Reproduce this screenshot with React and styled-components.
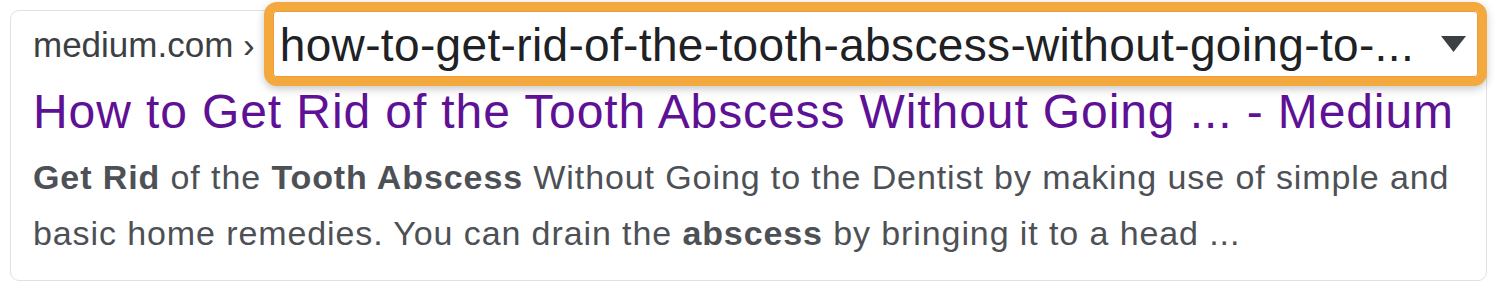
import React from "react"
import styled, { createGlobalStyle } from "styled-components"

const GlobalStyle = createGlobalStyle`
  body {
    margin: 0;
    background: #ffffff;
    font-family: "Liberation Sans", Arial, sans-serif;
  }
`

const Card = styled.div`
  box-sizing: border-box;
  width: 1477px;
  height: 271px;
  margin: 10px 0 0 10px;
  padding: 0 0 0 22px;
  border: 1px solid #dfe1e5;
  border-radius: 9px;
  background: #ffffff;
`

const Crumbs = styled.div`
  display: flex;
  align-items: center;
  margin: -9px -1px 0 0;
`

const Site = styled.span`
  font-size: 35px;
  color: #3c4043;
  white-space: nowrap;
  margin-right: 9px;
  padding-top: 2px;
`

const Slug = styled.div`
  flex: 1;
  display: flex;
  align-items: center;
  justify-content: space-between;
  box-sizing: border-box;
  height: 84px;
  padding: 0 12px 0 7px;
  border: 9px solid #f3a93e;
  border-radius: 13px;
  background: #ffffff;
  box-shadow: inset 0 0 0 1px #ef9a37, 0 3px 8px rgba(0, 0, 0, 0.22);
`

const SlugText = styled.span`
  font-size: 46px;
  letter-spacing: 0.35px;
  color: #202124;
  white-space: nowrap;
  padding-top: 2px;
`

const Title = styled.h3`
  margin: 0;
  font-size: 48px;
  letter-spacing: 0.9px;
  line-height: 52px;
  font-weight: 400;
  color: #5f1196;
  white-space: nowrap;
`

const Snippet = styled.p`
  margin: 11px 0 0;
  font-size: 34px;
  letter-spacing: 0.9px;
  line-height: 56px;
  color: #4d5156;
  white-space: nowrap;

  b {
    font-weight: 700;
    color: #4d5156;
  }
`

const Caret = () => (
  <svg width="25" height="16" viewBox="0 0 25 16">
    <path d="M0 0 H25 L12.5 16 Z" fill="#3c4043" />
  </svg>
)

const App = () => {
  return (
    <>
      <GlobalStyle />
      <Card>
        <Crumbs>
          <Site>medium.com ›</Site>
          <Slug>
            <SlugText>how-to-get-rid-of-the-tooth-abscess-without-going-to-...</SlugText>
            <Caret />
          </Slug>
        </Crumbs>
        <Title>How to Get Rid of the Tooth Abscess Without Going ... - Medium</Title>
        <Snippet>
          <b>Get Rid</b> of the <b>Tooth Abscess</b> Without Going to the Dentist by making use of simple and
          <br />
          basic home remedies. You can drain the <b>abscess</b> by bringing it to a head ...
        </Snippet>
      </Card>
    </>
  )
}

export default App
